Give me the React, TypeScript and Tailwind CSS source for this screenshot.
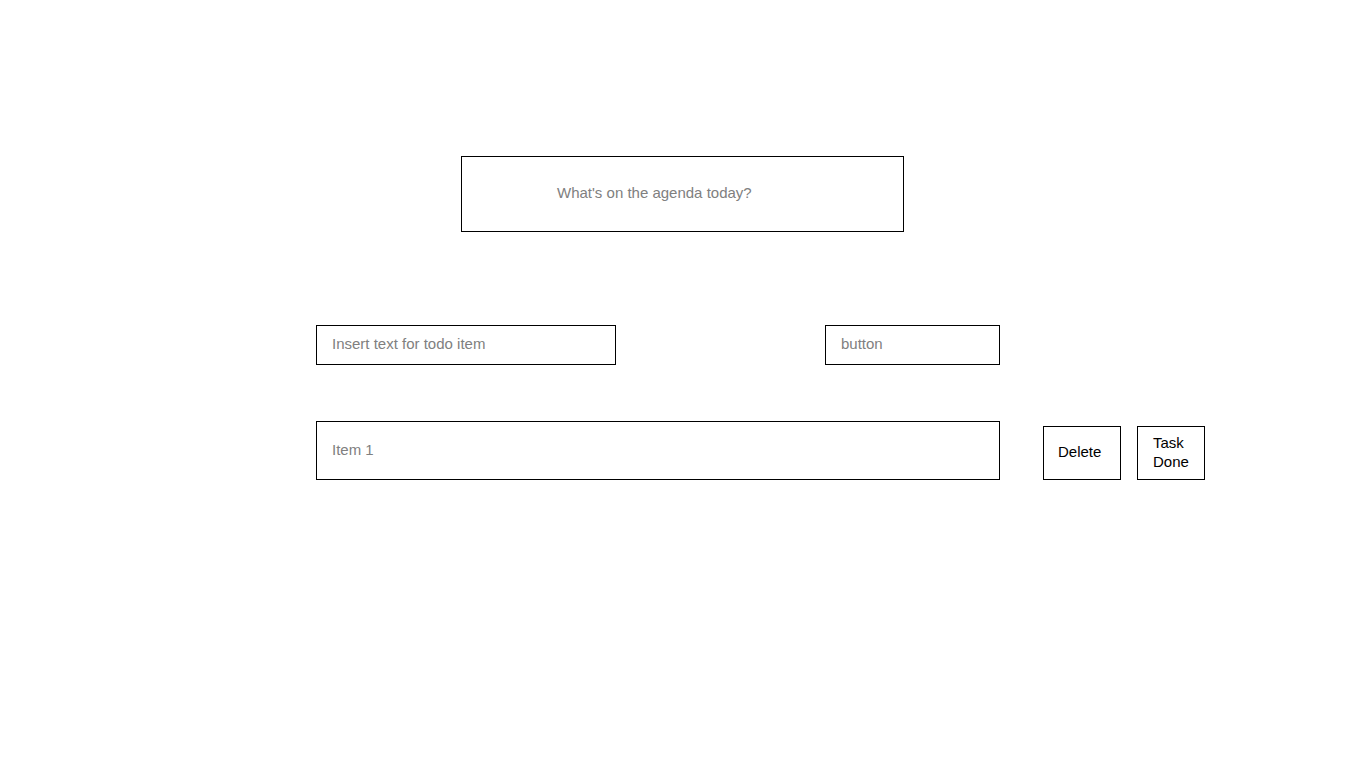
export default function App() {
  return (
    <div className="min-h-screen bg-white pt-[156px] font-['Liberation_Sans',Arial,sans-serif] text-[15px]">
      {/* Heading box */}
      <div className="ml-[461px] flex h-[76px] w-[443px] items-center border border-black pb-[2px] pl-[95px] text-[#808080]">
        What's on the agenda today?
      </div>

      {/* Input row */}
      <div className="ml-[316px] mt-[93px] flex items-start gap-[209px]">
        <div className="flex h-[40px] w-[300px] items-center border border-black pb-[2px] pl-[15px] text-[#808080]">
          Insert text for todo item
        </div>
        <div className="flex h-[40px] w-[175px] items-center border border-black pb-[2px] pl-[15px] text-[#808080]">
          button
        </div>
      </div>

      {/* Item row */}
      <div className="ml-[316px] mt-[56px] flex items-end">
        <div className="flex h-[59px] w-[684px] items-center border border-black pl-[15px] text-[#808080]">
          Item 1
        </div>
        <div className="ml-[43px] flex h-[54px] w-[78px] items-center border border-black pb-[2px] pl-[14px] text-black">
          Delete
        </div>
        <div className="ml-[16px] flex h-[54px] w-[68px] items-center border border-black pb-[2px] pl-[15px] leading-[19px] text-black">
          Task
          <br />
          Done
        </div>
      </div>
    </div>
  );
}
